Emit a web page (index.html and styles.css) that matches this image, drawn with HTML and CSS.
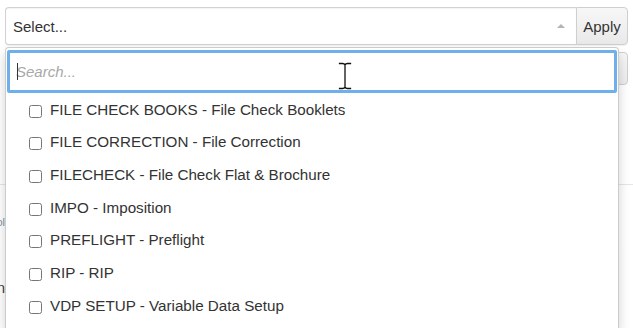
FILE: index.html
```html
<!DOCTYPE html>
<html>
<head>
<meta charset="utf-8">
<link rel="stylesheet" href="styles.css">
</head>
<body>
<div class="page">
  <div class="input-group">
    <div class="select">
      <span class="select-text">Select...</span>
      <span class="caret-up"></span>
    </div>
    <button class="btn-apply">Apply</button>
  </div>
  <div class="bg-row">
    <div class="bg-spacer"></div>
    <span class="bg-btn"></span>
  </div>
  <div class="bg-section">
    <div class="bg-frag small">Tool</div>
    <div class="bg-frag dark">Design</div>
  </div>

  <div class="dropdown">
    <div class="search-wrap">
      <input class="search" type="text" placeholder="Search...">
      <span class="text-caret"></span>
    </div>
    <ul class="options">
      <li class="option"><input type="checkbox" class="check"><span>FILE CHECK BOOKS - File Check Booklets</span></li>
      <li class="option"><input type="checkbox" class="check"><span>FILE CORRECTION - File Correction</span></li>
      <li class="option"><input type="checkbox" class="check"><span>FILECHECK - File Check Flat &amp; Brochure</span></li>
      <li class="option"><input type="checkbox" class="check"><span>IMPO - Imposition</span></li>
      <li class="option"><input type="checkbox" class="check"><span>PREFLIGHT - Preflight</span></li>
      <li class="option"><input type="checkbox" class="check"><span>RIP - RIP</span></li>
      <li class="option"><input type="checkbox" class="check"><span>VDP SETUP - Variable Data Setup</span></li>
    </ul>
  </div>

  <svg class="ibeam" width="14" height="28" viewBox="0 0 14 28">
    <g fill="none" stroke-linecap="square">
      <path d="M1.5 1.5 H4.5 Q6.5 1.5 7 3 Q7.5 1.5 9.5 1.5 H12.5 M7 3 V25 M1.5 26.5 H4.5 Q6.5 26.5 7 25 Q7.5 26.5 9.5 26.5 H12.5" stroke="#fff" stroke-width="3"/>
      <path d="M1.5 1.5 H4.5 Q6.5 1.5 7 3 Q7.5 1.5 9.5 1.5 H12.5 M7 3 V25 M1.5 26.5 H4.5 Q6.5 26.5 7 25 Q7.5 26.5 9.5 26.5 H12.5" stroke="#111" stroke-width="1.3"/>
    </g>
  </svg>
</div>
</body>
</html>
```

FILE: styles.css
```css
html, body {
  margin: 0;
  padding: 0;
  background: #fff;
}
body {
  width: 633px;
  height: 328px;
  overflow: hidden;
  font-family: "Liberation Sans", Arial, sans-serif;
  font-size: 15px;
  color: #333;
}
.page {
  position: relative;
  height: 328px;
  padding: 7px 5px 0 5px;
  box-sizing: border-box;
  overflow: hidden;
}
.input-group {
  display: flex;
  height: 38px;
}
.select {
  flex: 1;
  display: flex;
  align-items: center;
  justify-content: space-between;
  border: 1px solid #d2d2d2;
  border-right: none;
  border-radius: 4px 0 0 4px;
  box-shadow: inset 0 1px 1px rgba(0,0,0,.05), 0 1px 1px rgba(0,0,0,.06);
  padding: 0 11px 0 7px;
  background: #fff;
}
.caret-up {
  width: 0;
  height: 0;
  border-left: 4px solid transparent;
  border-right: 4px solid transparent;
  border-bottom: 4px solid #b3b3b3;
}
.btn-apply {
  width: 52px;
  font-family: inherit;
  font-size: 15px;
  color: #333;
  padding: 0;
  border: 1px solid #cfcfcf;
  border-radius: 0 4px 4px 0;
  background: linear-gradient(#f7f7f7, #e9e9e9);
  box-shadow: 0 1px 1px rgba(0,0,0,.06);
}
.bg-row {
  display: flex;
  margin-top: 7px;
  height: 33px;
}
.bg-spacer { flex: 1; }
.bg-btn {
  width: 60px;
  border: 1px solid #cfcfcf;
  border-radius: 4px;
  background: linear-gradient(#f7f7f7, #ececec);
  box-sizing: border-box;
}
.bg-section {
  margin: 99px -5px 0 -5px;
  border-top: 1px solid #e6e6e6;
  padding-top: 31px;
}
.bg-frag {
  width: 5px;
  overflow: hidden;
  display: flex;
  justify-content: flex-end;
  white-space: nowrap;
}
.bg-frag.small {
  font-size: 11px;
  color: #7d8fa3;
  line-height: 13px;
}
.bg-frag.dark {
  margin-top: 50px;
  font-size: 15px;
  color: #444;
  line-height: 17px;
}
.dropdown {
  position: absolute;
  left: 5px;
  top: 47px;
  width: 614px;
  height: 281px;
  box-sizing: border-box;
  background: #fff;
  border: 1px solid rgba(0,0,0,.2);
  border-bottom: none;
  border-radius: 4px 4px 0 0;
  box-shadow: 0 6px 12px rgba(0,0,0,.175);
  padding: 2px 1px 0 1px;
  overflow: hidden;
}
.search-wrap {
  position: relative;
}
.search {
  display: block;
  width: 100%;
  height: 43px;
  box-sizing: border-box;
  border: 3px solid #6fb0ea;
  border-radius: 2px;
  padding: 0 6px;
  font-family: inherit;
  font-size: 15px;
  color: #333;
  outline: none;
  background: #fff;
}
.search::placeholder {
  color: #a8a8a8;
  font-style: italic;
}
.text-caret {
  position: absolute;
  left: 10px;
  top: 13px;
  width: 1px;
  height: 17px;
  background: #333;
}
.options {
  list-style: none;
  margin: 0;
  padding: 0;
  font-size: 15.2px;
}
.option {
  display: flex;
  align-items: center;
  height: 32.67px;
  padding-left: 22px;
}
.check {
  width: 13px;
  height: 13px;
  margin: 4px 8px 0 0;
}
.ibeam {
  position: absolute;
  left: 338px;
  top: 62px;
}
```
